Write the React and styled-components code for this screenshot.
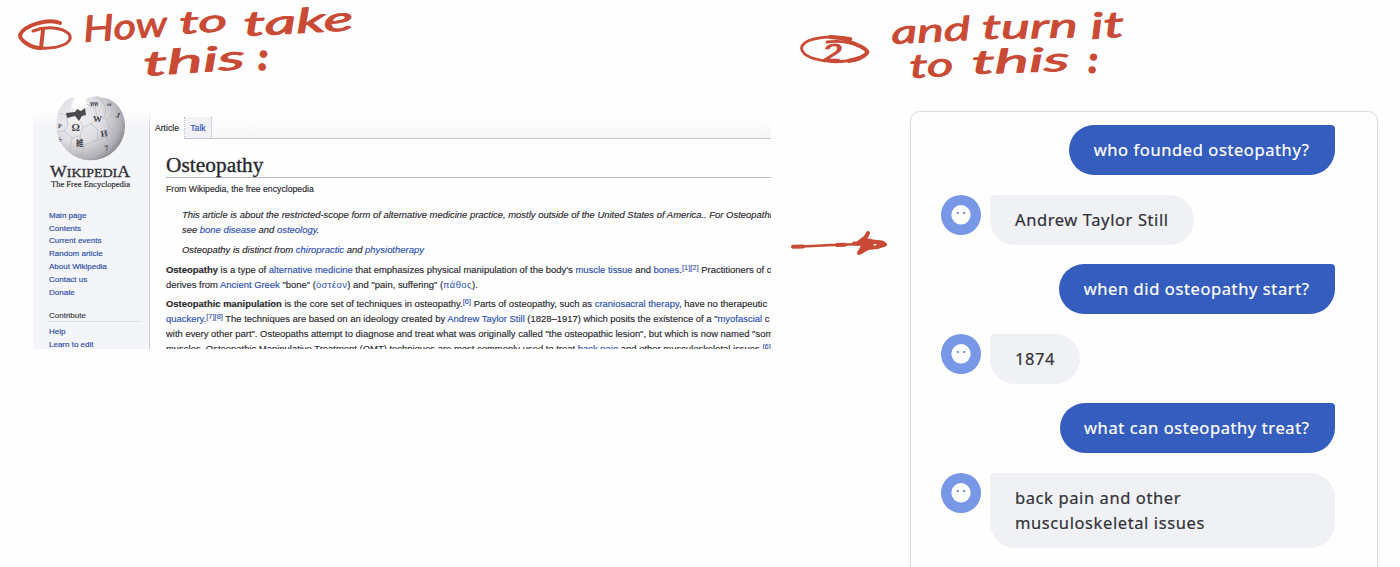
import React from "react";
import styled, { createGlobalStyle } from "styled-components";

const GlobalStyle = createGlobalStyle`
  * { box-sizing: border-box; }
  body { margin: 0; background: #fefefe; overflow: hidden; }
`;

const INK = "#c94a35";

const Page = styled.main`
  display: flex;
  width: 1400px;
  height: 567px;
  overflow: hidden;
  background: #fefefe;
  font-family: "Liberation Sans", Arial, sans-serif;
`;
const SourceColumn = styled.section`
  width: 780px;
  flex: none;
`;
const ResultColumn = styled.section`
  width: 620px;
  flex: none;
`;
const Sketch = styled.svg`
  display: block;
  overflow: visible;
  fill: none;
  stroke: ${INK};
  stroke-width: 4;
  stroke-linecap: round;
  stroke-linejoin: round;
`;
const Ink = styled.text`
  fill: ${INK};
  stroke: ${INK};
  stroke-width: ${(p) => p.$weight || 0.9};
  font-family: Lato, sans-serif;
  font-style: italic;
  font-weight: 400;
`;

/* Encyclopedia article */
const Wiki = styled.div`
  display: flex;
  width: 738px;
  height: 258.5px;
  margin-left: 33px;
  overflow: hidden;
  color: #29292e;
  -webkit-text-stroke: 0.15px currentColor;
`;
const Sidebar = styled.aside`
  width: 117px;
  flex: none;
  padding-left: 16px;
  background: linear-gradient(#fefefe 20px, #f4f5f8 36px);
  border-right: 1px dotted;
  border-image: linear-gradient(#fefefe 20px, #c9cad2 40px) 1;
`;
const Logo = styled.svg`
  display: block;
  width: 86px;
  height: 104px;
  margin-left: -1px;
  overflow: visible;
  -webkit-text-stroke: 0;
`;
const NavList = styled.nav`
  display: flex;
  flex-direction: column;
  padding-top: ${(p) => p.$top}px;
`;
const NavItem = styled.a`
  height: 12.85px;
  line-height: 12.85px;
  font-size: 8px;
  white-space: nowrap;
  color: #2b4ba6;
`;
const NavHeading = styled.h3`
  margin: 10.5px 8px 0 0;
  height: 12px;
  border-bottom: 1px dotted #cfd0d8;
  font-size: 8px;
  line-height: 11px;
  font-weight: 400;
  color: #3c3d45;
`;
const Content = styled.div`
  flex: 1;
  min-width: 0;
`;
const Tabs = styled.div`
  display: flex;
  height: 48.5px;
  padding-top: 27px;
  background: linear-gradient(#fefefe 26px, #f5f6f8 48px);
`;
const Tab = styled.div`
  width: ${(p) => p.$width}px;
  height: 21.5px;
  line-height: 23px;
  font-size: 8.7px;
  text-align: center;
  color: ${(p) => (p.$active ? "#29292e" : "#2c50b2")};
  background: ${(p) => (p.$active ? "#fefefe" : "#f1f2f5")};
  border-right: 1px dotted #babbc4;
  border-bottom: ${(p) => (p.$active ? "none" : "1px solid #c2c3cc")};
`;
const TabRest = styled.div`
  flex: 1;
  border-bottom: 1px solid #c2c3cc;
`;
const Article = styled.article`
  padding: 15px 0 0 16px;
  white-space: nowrap;
`;
const Title = styled.h1`
  margin: 0;
  height: 24.5px;
  border-bottom: 1px solid #b9bac6;
  font: 400 21.3px/23px "Liberation Serif", serif;
  letter-spacing: 0.05px;
  -webkit-text-stroke: 0.35px currentColor;
`;
const SubTitle = styled.div`
  height: 22px;
  line-height: 23px;
  font-size: 8.7px;
`;
const Hatnote = styled.p`
  margin: ${(p) => p.$top}px 0 0 16px;
  font-size: 9.45px;
  line-height: 15px;
  font-style: italic;
`;
const Paragraph = styled.p`
  margin: 4.7px 0 0;
  font-size: 9.45px;
  line-height: 15px;
`;
const Line = styled.span`
  display: block;
  height: 15px;
`;
const Link = styled.a`
  color: #2c50b2;
`;
const GreekLink = styled(Link)`
  letter-spacing: 0.4px;
  -webkit-text-stroke: 0;
`;
const Ref = styled.sup`
  font-size: 7.5px;
  line-height: 1;
  vertical-align: 3.4px;
  color: #3f5cab;
`;

/* Chat */
const ResultBody = styled.div`
  display: flex;
  padding-top: 21px;
`;
const ArrowSlot = styled.div`
  width: 130px;
  flex: none;
  padding-top: 109px;
`;
const ChatPanel = styled.div`
  display: flex;
  flex-direction: column;
  gap: 19.6px;
  width: 468px;
  height: 480px;
  flex: none;
  padding: 13px 42px 0 30px;
  border: 1px solid #d7d8df;
  border-radius: 10px;
`;
const Message = styled.div`
  display: flex;
  justify-content: ${(p) => (p.$own ? "flex-end" : "flex-start")};
  gap: 9px;
`;
const Bubble = styled.div`
  flex: ${(p) => (p.$wide ? "1" : "none")};
  padding: ${(p) => (p.$own ? "12px 25.5px 13px 24.5px" : "12.5px 25px")};
  border-radius: ${(p) => (p.$own ? "25px 4px 25px 25px" : "4px 25px 25px 25px")};
  background: ${(p) => (p.$own ? "#355dbe" : "#f0f1f5")};
  color: ${(p) => (p.$own ? "#ffffff" : "#323238")};
  font: 400 16.5px/25px "Noto Sans", "Open Sans", sans-serif;
  letter-spacing: 0.6px;
  -webkit-text-stroke: 0.2px currentColor;
  white-space: nowrap;
`;
const Avatar = styled.svg`
  display: block;
  flex: none;
  width: 40px;
  height: 40px;
`;

function FirstNote() {
  return (
    <Sketch width="380" height="90" viewBox="0 0 380 90">
      <path d="M60 23C49 18 24 25 20 35C20 41 32 48 40 48" />
      <path d="M43 30L41 48" />
      <path d="M33 31C46 26 62 27 69 34C75 43 58 49 41 48" strokeWidth="3" />
      <Ink x="84" y="42" fontSize="36" textLength="84" lengthAdjust="spacingAndGlyphs" transform="rotate(-4 84 42)">How</Ink>
      <Ink x="180" y="34" fontSize="31" textLength="48" lengthAdjust="spacingAndGlyphs" transform="rotate(-4 180 34)">to</Ink>
      <Ink x="244" y="36" fontSize="34" textLength="110" lengthAdjust="spacingAndGlyphs" transform="rotate(-3 244 36)">take</Ink>
      <Ink x="144" y="76" fontSize="34" textLength="102" lengthAdjust="spacingAndGlyphs" transform="rotate(-4 144 76)">this</Ink>
      <Ink x="259" y="69" fontSize="33" $weight={3.5}>:</Ink>
    </Sketch>
  );
}

function SecondNote() {
  return (
    <Sketch width="380" height="90" viewBox="0 0 380 90">
      <path d="M71 39C53 35 27 37 22 46C18 57 45 64 66 61C82 58 91 53 87 51C78 44 65 40 47 42" strokeWidth="2.8" />
      <path d="M65 41C77 43 89 50 87 53C83 58 76 60 69 61M50 37L70 39" />
      <Ink x="42" y="61" fontSize="23" textLength="21" lengthAdjust="spacingAndGlyphs">2</Ink>
      <Ink x="112" y="44" fontSize="33" textLength="79" lengthAdjust="spacingAndGlyphs" transform="rotate(-3 112 44)">and</Ink>
      <Ink x="202" y="39" fontSize="34" textLength="96" lengthAdjust="spacingAndGlyphs" transform="rotate(-1 202 39)">turn</Ink>
      <Ink x="311" y="39" fontSize="36" textLength="34" lengthAdjust="spacingAndGlyphs" transform="rotate(-4 311 39)">it</Ink>
      <Ink x="130" y="78" fontSize="33" textLength="44" lengthAdjust="spacingAndGlyphs" transform="rotate(-3 130 78)">to</Ink>
      <Ink x="192" y="74" fontSize="33" textLength="98" lengthAdjust="spacingAndGlyphs" transform="rotate(-2 192 74)">this</Ink>
      <Ink x="309" y="72" fontSize="33" $weight={3.2}>:</Ink>
    </Sketch>
  );
}

function Arrow() {
  return (
    <Sketch width="130" height="50" viewBox="0 0 130 50">
      <path d="M13 26.5L22 26.5L52 25L84 24" strokeWidth="2.4" />
      <path d="M13 26.8L23 26.5M57 25L65 24.8" />
      <path d="M88 13L84 21L82 28L79 33L88 28L97 27L105 24.5L102 22.5L93 21.5L86 20L84 24L74 23.5" fill={INK} />
      <path d="M94 25L96 24.7" stroke="#fefefe" strokeWidth="1.3" />
    </Sketch>
  );
}

function WikiLogo() {
  return (
    <Logo viewBox="48 90 86 104">
      <defs>
        <radialGradient id="globe" cx="0.3" cy="0.35" r="0.75">
          <stop offset="0" stopColor="#f3f3f6" />
          <stop offset="0.5" stopColor="#dedee2" />
          <stop offset="0.85" stopColor="#b0b0b7" />
          <stop offset="1" stopColor="#85858d" />
        </radialGradient>
      </defs>
      <path
        d="M62 105C66 99 71 97 74 98L71 107L77 112L84 110L88 105L86 99L90 97C94 97 97 95 101 97.500C115 98 125 111 125 126A34.300 34.300 0 0 1 56.400 126C56.400 117 58 110 62 105Z"
        fill="url(#globe)"
      />
      <path d="M66 113L75 112L77 109L81 111L85 108L86 115L82 116L79 121L75 116L67 118Z" fill="#4a4a50" />
      <path
        d="M60 113L66 115L68 125L64 131L72 138L80 136L83 128L81 121M80 136L84 145L82 159M86 104L95 108L97 117L91 124L83 128M97 117L107 119L114 113L123 116M91 124L98 130L97 140L84 145M107 119L110 129L106 137L97 140M110 129L124 130M106 137L112 145L108 154M72 138L70 150M100 98L106 107L104 118M57 132L64 131"
        fill="none"
        stroke="#b4b4bb"
        strokeWidth="0.6"
      />
      <g fill="#45454c" fontFamily="Liberation Serif, Noto Sans CJK JP, serif" fontWeight="700">
        <text x="71.500" y="131" fontSize="10.500">Ω</text>
        <text x="93" y="121.500" fontSize="9">W</text>
        <text x="101" y="137" fontSize="9" transform="rotate(-8 101 137)">И</text>
        <text x="76" y="146" fontSize="7.500">維</text>
        <text x="105" y="151" fontSize="8" transform="rotate(-10 105 151)">7</text>
        <text x="115" y="117" fontSize="8" transform="rotate(20 115 117)">J</text>
        <text x="58" y="128" fontSize="6">P</text>
        <text x="59" y="142" fontSize="6">ל</text>
        <text x="90" y="106" fontSize="6">ทท</text>
        <text x="107" y="106" fontSize="6">ω</text>
      </g>
      <g fill="#303035" fontFamily="Liberation Serif, serif">
        <text x="50" y="177" textLength="80" lengthAdjust="spacingAndGlyphs" fontSize="13" stroke="#303035" strokeWidth="0.3">
          <tspan fontSize="16.500">W</tspan>IKIPEDI<tspan fontSize="16.500">A</tspan>
        </text>
        <text x="51" y="186.500" textLength="79" lengthAdjust="spacingAndGlyphs" fontSize="8.800" stroke="#303035" strokeWidth="0.2">The Free Encyclopedia</text>
      </g>
    </Logo>
  );
}

function BotAvatar() {
  return (
    <Avatar viewBox="0 0 40 40">
      <circle cx="20" cy="20" r="20" fill="#7897e6" />
      <circle cx="20" cy="19.800" r="9.700" fill="#fefefe" />
      <circle cx="16.800" cy="18" r="1.100" fill="#5377c8" />
      <circle cx="23.200" cy="18" r="1.100" fill="#5377c8" />
    </Avatar>
  );
}

const NAV = ["Main page", "Contents", "Current events", "Random article", "About Wikipedia", "Contact us", "Donate"];

const MESSAGES = [
  { own: true, lines: ["who founded osteopathy?"] },
  { lines: ["Andrew Taylor Still"] },
  { own: true, lines: ["when did osteopathy start?"] },
  { lines: ["1874"] },
  { own: true, lines: ["what can osteopathy treat?"] },
  { wide: true, lines: ["back pain and other", "musculoskeletal issues"] },
];

export default function App() {
  return (
    <Page>
      <GlobalStyle />
      <SourceColumn>
        <FirstNote />
        <Wiki>
          <Sidebar>
            <WikiLogo />
            <NavList $top={15.8}>
              {NAV.map((item) => (
                <NavItem key={item}>{item}</NavItem>
              ))}
            </NavList>
            <NavHeading>Contribute</NavHeading>
            <NavList $top={4}>
              <NavItem>Help</NavItem>
              <NavItem>Learn to edit</NavItem>
            </NavList>
          </Sidebar>
          <Content>
            <Tabs>
              <Tab $active $width={35}>Article</Tab>
              <Tab $width={27}>Talk</Tab>
              <TabRest />
            </Tabs>
            <Article>
              <Title>Osteopathy</Title>
              <SubTitle>From Wikipedia, the free encyclopedia</SubTitle>
              <Hatnote $top={7.3}>
                <Line>This article is about the restricted-scope form of alternative medicine practice, mostly outside of the United States of America.. For Osteopathi</Line>
                <Line>see <Link>bone disease</Link> and <Link>osteology</Link>.</Line>
              </Hatnote>
              <Hatnote $top={4.7}>
                <Line>Osteopathy is distinct from <Link>chiropractic</Link> and <Link>physiotherapy</Link></Line>
              </Hatnote>
              <Paragraph>
                <Line><b>Osteopathy</b> is a type of <Link>alternative medicine</Link> that emphasizes physical manipulation of the body's <Link>muscle tissue</Link> and <Link>bones</Link>.<Ref>[1][2]</Ref> Practitioners of c</Line>
                <Line>derives from <Link>Ancient Greek</Link> "bone" (<GreekLink>ὀστέον</GreekLink>) and "pain, suffering" (<GreekLink>πάθος</GreekLink>).</Line>
              </Paragraph>
              <Paragraph>
                <Line><b>Osteopathic manipulation</b> is the core set of techniques in osteopathy.<Ref>[6]</Ref> Parts of osteopathy, such as <Link>craniosacral therapy</Link>, have no therapeutic</Line>
                <Line><Link>quackery</Link>.<Ref>[7][8]</Ref> The techniques are based on an ideology created by <Link>Andrew Taylor Still</Link> (1828–1917) which posits the existence of a "<Link>myofascial</Link> c</Line>
                <Line>with every other part". Osteopaths attempt to diagnose and treat what was originally called "the osteopathic lesion", but which is now named "som</Line>
                <Line>muscles. Osteopathic Manipulative Treatment (OMT) techniques are most commonly used to treat <Link>back pain</Link> and other musculoskeletal issues.<Ref>[6]</Ref></Line>
              </Paragraph>
            </Article>
          </Content>
        </Wiki>
      </SourceColumn>
      <ResultColumn>
        <SecondNote />
        <ResultBody>
          <ArrowSlot>
            <Arrow />
          </ArrowSlot>
          <ChatPanel>
            {MESSAGES.map((m) => (
              <Message key={m.lines[0]} $own={m.own}>
                {!m.own && <BotAvatar />}
                <Bubble $own={m.own} $wide={m.wide}>
                  {m.lines.map((line) => (
                    <div key={line}>{line}</div>
                  ))}
                </Bubble>
              </Message>
            ))}
          </ChatPanel>
        </ResultBody>
      </ResultColumn>
    </Page>
  );
}
